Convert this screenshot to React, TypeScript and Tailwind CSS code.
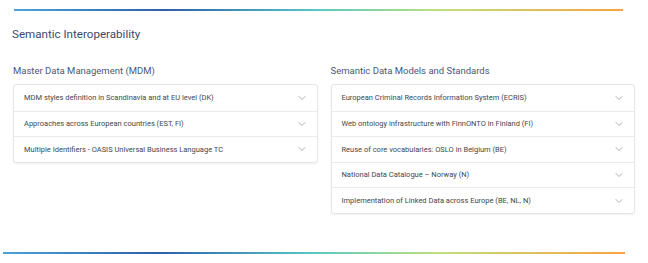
import { ChevronDown } from "lucide-react";

const mdm = [
  "MDM styles definition in Scandinavia and at EU level (DK)",
  "Approaches across European countries (EST, FI)",
  "Multiple Identifiers - OASIS Universal Business Language TC",
];

const models = [
  "European Criminal Records Information System (ECRIS)",
  "Web ontology infrastructure with FinnONTO in Finland (FI)",
  "Reuse of core vocabularies: OSLO in Belgium (BE)",
  "National Data Catalogue – Norway (N)",
  "Implementation of Linked Data across Europe (BE, NL, N)",
];

const rainbow =
  "bg-[linear-gradient(90deg,#4ba3d8_0%,#2d5fae_25%,#58c9c4_50%,#bfe07c_70%,#f9a23f_100%)]";

function Group({ title, items }: { title: string; items: string[] }) {
  return (
    <div className="flex-1">
      <h3 className="text-[9.5px] leading-[13px] text-[#4a5874] mb-[7px]">{title}</h3>
      <div className="rounded-[3px] border border-[#e4e6ea] bg-white shadow-[0_1px_2px_rgba(0,0,0,0.06)]">
        {items.map((item, i) => (
          <div
            key={item}
            className={`flex items-center justify-between h-[25.6px] pl-[10px] pr-[9px] ${
              i > 0 ? "border-t border-[#e8eaed]" : ""
            }`}
          >
            <span className="text-[7.5px] text-[#41464e]">{item}</span>
            <ChevronDown className="w-[12px] h-[12px] text-[#7d828a]" strokeWidth={1.3} />
          </div>
        ))}
      </div>
    </div>
  );
}

export default function App() {
  return (
    <main className="w-[648px] h-[263px] bg-white overflow-hidden font-['Roboto',sans-serif]">
      <div className={`ml-[14px] mr-[25px] mt-[9px] h-[2px] ${rainbow}`} />
      <h2 className="mt-[16px] ml-[12px] text-[11.6px] leading-[14px] text-[#3c4a6a]">
        Semantic Interoperability
      </h2>
      <div className="mt-[23px] ml-[13px] mr-[13px] flex gap-[13px] items-start">
        <Group title="Master Data Management (MDM)" items={mdm} />
        <Group title="Semantic Data Models and Standards" items={models} />
      </div>
      <div className={`ml-[3px] mr-[23px] mt-[38px] h-[2px] ${rainbow}`} />
    </main>
  );
}
